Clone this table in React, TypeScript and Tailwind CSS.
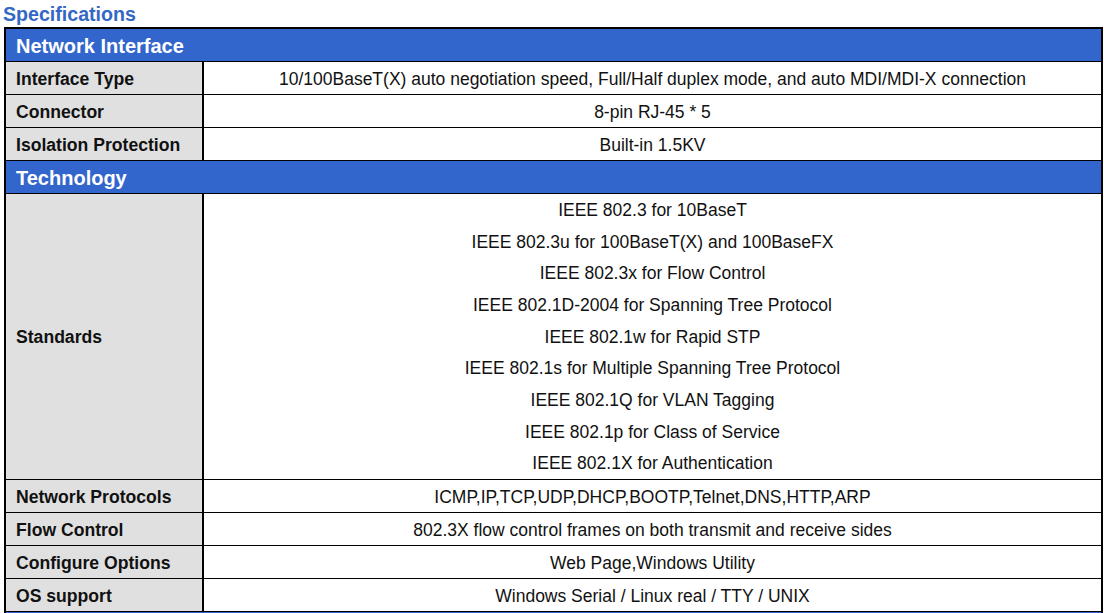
import React from "react";

const font = { fontFamily: '"Liberation Sans", Arial, sans-serif' };

type Row = { label: string; value: string[]; tall?: boolean };

const network: Row[] = [
  {
    label: "Interface Type",
    value: ["10/100BaseT(X) auto negotiation speed, Full/Half duplex mode, and auto MDI/MDI-X connection"],
  },
  { label: "Connector", value: ["8-pin RJ-45 * 5"] },
  { label: "Isolation Protection", value: ["Built-in 1.5KV"] },
];

const technology: Row[] = [
  {
    label: "Standards",
    tall: true,
    value: [
      "IEEE 802.3 for 10BaseT",
      "IEEE 802.3u for 100BaseT(X) and 100BaseFX",
      "IEEE 802.3x for Flow Control",
      "IEEE 802.1D-2004 for Spanning Tree Protocol",
      "IEEE 802.1w for Rapid STP",
      "IEEE 802.1s for Multiple Spanning Tree Protocol",
      "IEEE 802.1Q for VLAN Tagging",
      "IEEE 802.1p for Class of Service",
      "IEEE 802.1X for Authentication",
    ],
  },
  { label: "Network Protocols", value: ["ICMP,IP,TCP,UDP,DHCP,BOOTP,Telnet,DNS,HTTP,ARP"] },
  { label: "Flow Control", value: ["802.3X flow control frames on both transmit and receive sides"] },
  { label: "Configure Options", value: ["Web Page,Windows Utility"] },
  { label: "OS support", value: ["Windows Serial / Linux real / TTY / UNIX"] },
];

function SectionHeader({ title }: { title: string }) {
  return (
    <div className="h-[33px] bg-[#3366cc] border-b border-black flex items-center pl-[10px] pt-[2px] text-white font-bold text-[20px]">
      {title}
    </div>
  );
}

function SpecRow({ row }: { row: Row }) {
  return (
    <div className={`flex border-b border-black ${row.tall ? "h-[286px]" : "h-[33px]"}`}>
      <div className="w-[198px] shrink-0 bg-[#e0e0e0] border-r-2 border-black flex items-center pl-[10px] pt-[2px] font-bold text-[17.6px] text-[#111]">
        {row.label}
      </div>
      <div className="flex-1 flex flex-col justify-center items-center pt-[2px] text-[17.5px] text-[#111]">
        {row.value.map((v) => (
          <div key={v} className={row.tall ? "leading-[31.7px]" : "leading-[20px]"}>
            {v}
          </div>
        ))}
      </div>
    </div>
  );
}

export default function App() {
  return (
    <div className="w-[1104px] h-[613px] bg-white overflow-hidden" style={font}>
      {/* Title */}
      <div className="h-[27px] pl-[3px] pt-[2px] text-[19.6px] font-bold text-[#3567c6] leading-[24px]">
        Specifications
      </div>

      {/* Spec table */}
      <div className="ml-[4px] w-[1099px] border-x-2 border-t-2 border-black">
        <SectionHeader title="Network Interface" />
        {network.map((r) => (
          <SpecRow key={r.label} row={r} />
        ))}
        <SectionHeader title="Technology" />
        {technology.map((r) => (
          <SpecRow key={r.label} row={r} />
        ))}
        <div className="h-[3px] bg-[#3366cc]" />
      </div>
    </div>
  );
}
